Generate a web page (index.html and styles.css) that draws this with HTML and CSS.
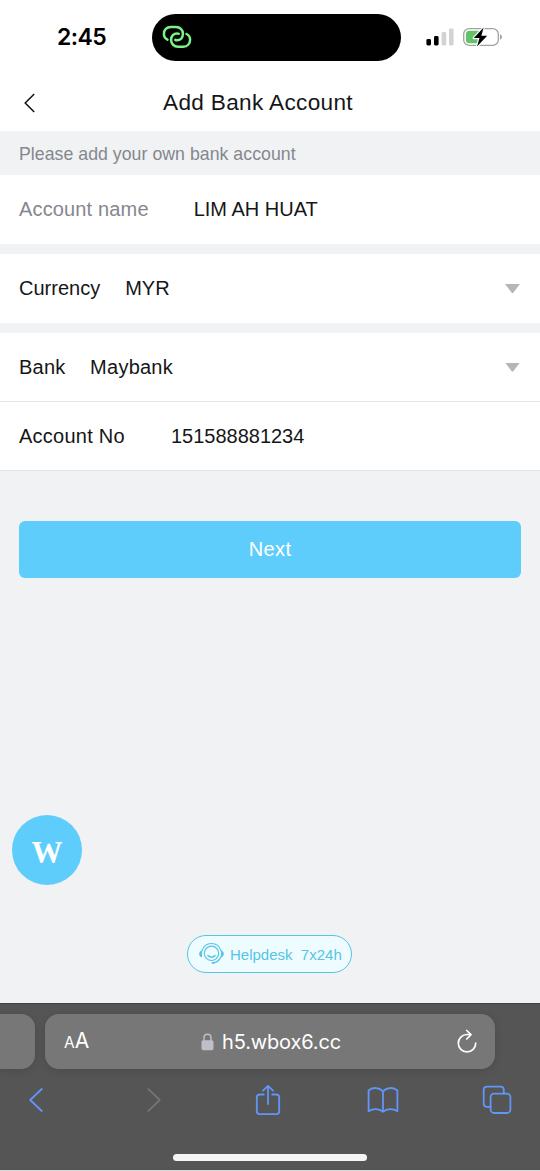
FILE: index.html
```html
<!DOCTYPE html>
<html lang="en">
<head>
<meta charset="utf-8">
<title>Add Bank Account</title>
<link rel="stylesheet" href="styles.css">
</head>
<body>
<div class="phone">
  <div class="status">
    <span class="time">2:45</span>
    <div class="island">
      <svg width="32" height="28" viewBox="0 0 32 28" fill="none" stroke="#7ff286" stroke-width="2.5" stroke-linecap="round">
        <path d="M6.500 16.700C4.300 15.600 2.900 13.500 2.900 11C2.900 6.900 5.700 4 9.700 4H15C19 4 21.900 6.900 21.900 10.800C21.900 14.900 19.300 17.300 16 17.300C15.300 17.300 14.800 17.200 14.300 16.900"/>
        <path d="M25.500 11C27.700 12.100 29.100 14.200 29.100 16.700C29.100 20.800 26.300 23.700 22.300 23.700H17C13 23.700 10.100 20.800 10.100 16.900C10.100 12.800 12.700 10.400 16 10.400C16.700 10.400 17.200 10.500 17.700 10.800"/>
      </svg>
    </div>
    <svg class="signal" width="28" height="18" viewBox="0 0 28 18">
      <rect x="0.400" y="11" width="4.600" height="6.500" rx="1.400"/>
      <rect x="8" y="8" width="4.600" height="9.500" rx="1.400"/>
      <rect x="15.600" y="4" width="4.600" height="13.500" rx="1.400" fill="#d3d3d5"/>
      <rect x="23" y="0.500" width="4.600" height="17" rx="1.400" fill="#d3d3d5"/>
    </svg>
    <svg class="battery" width="41" height="22" viewBox="0 0 41 22">
      <rect x="1.700" y="2.600" width="34.600" height="16.800" rx="5.500" fill="#fff" stroke="#a2a2a5" stroke-width="1.300"/>
      <path d="M38 8.200Q40 9 40 11T38 13.800Z" fill="#a2a2a5"/>
      <rect x="3.900" y="4.700" width="15" height="12.600" rx="3.600" fill="#62c466"/>
      <path d="M21.600 1.500L11.800 12H17.500L15 20.500L25.200 9.700H19.400Z" fill="#000" stroke="#fff" stroke-width="2.400" paint-order="stroke" stroke-linejoin="round"/>
    </svg>
  </div>
  <header class="header">
    <svg class="back" width="12" height="20" viewBox="0 0 12 20" fill="none" stroke="#111" stroke-width="1.500"><path d="M10.200 1L1.200 10L10.200 19"/></svg>
    <h1 class="title">Add Bank Account</h1>
  </header>
  <main class="main">
    <p class="notice">Please add your own bank account</p>
    <section class="group">
      <div class="row"><span class="muted">Account name</span><span class="name">LIM AH HUAT</span></div>
    </section>
    <section class="group">
      <div class="row"><span>Currency</span><span class="currency">MYR</span><i class="caret"></i></div>
    </section>
    <section class="group">
      <div class="row lined"><span class="wide">Bank</span><span class="bank">Maybank</span><i class="caret"></i></div>
      <div class="row lined"><span class="wide">Account No</span><span class="number">151588881234</span></div>
    </section>
    <button class="next">Next</button>
    <div class="helpdesk">
      <svg width="28" height="24" viewBox="0 0 28 24" fill="none" stroke="#55c4e6" stroke-width="1.200" stroke-linecap="round">
        <circle cx="13.500" cy="11.300" r="7.200"/>
        <path d="M4 9C5.300 4.300 9 1.500 13.500 1.500S21.700 4.300 23 9M23 14.500C21.800 18 19.500 20 16 20.700"/>
        <path d="M10 13.700Q13.500 16.800 17 13.700" stroke-width="1.600"/>
        <path d="M4 8.400C0.200 8.800 0.200 14.700 4 15.200ZM23 8.400C26.800 8.800 26.800 14.700 23 15.200Z" fill="#55c4e6" stroke="none"/>
        <path d="M14.500 20.900H16" stroke-width="1.900"/>
      </svg>
      <span>Helpdesk&nbsp; 7x24h</span>
    </div>
    <div class="bubble">W</div>
  </main>
  <footer class="browser">
    <div class="tabs">
      <div class="tab-previous"></div>
      <div class="address">
        <span class="text-size"><small>A</small>A</span>
        <span class="domain">
          <svg width="13" height="18" viewBox="0 0 13 18"><rect x="0.500" y="7.300" width="12" height="10" rx="1.700" fill="#c0bfc7"/><path d="M3 8V4.800C3 0.100 10 0.100 10 4.800V8" fill="none" stroke="#c0bfc7" stroke-width="1.500"/></svg>
          <span class="url">h5.wbox6.cc</span>
        </span>
        <svg class="reload" width="22" height="26" viewBox="0 0 22 26" fill="none" stroke="#fff" stroke-width="1.700" stroke-linecap="round" stroke-linejoin="round"><path d="M19.700 14.200A8.700 8.700 0 1 1 11 5.500H14.800M10.700 1.500L15 5.700L10.700 10"/></svg>
      </div>
    </div>
    <nav class="tools">
      <svg width="16" height="26" viewBox="0 0 16 26"><path d="M13.800 2L2.200 13L13.800 24"/></svg>
      <svg class="disabled" width="16" height="26" viewBox="0 0 16 26"><path d="M2.200 2L13.800 13L2.200 24"/></svg>
      <svg class="share" width="26" height="32" viewBox="0 0 26 32"><path d="M8.800 10.500H4.700Q1.800 10.500 1.800 13.400V27.200Q1.800 30.100 4.700 30.100H21.300Q24.200 30.100 24.200 27.200V13.400Q24.200 10.500 21.300 10.500H17.200M13 20V2M8 6.700L13 1.800L18 6.700"/></svg>
      <svg class="book" width="32" height="28" viewBox="0 0 32 28"><path d="M16 5.500C12.500 1.300 5.500 0.800 1.600 4.500V25.300C6 22.200 12.300 22.400 16 25.800C19.700 22.400 26 22.200 30.400 25.300V4.500C26.500 0.800 19.500 1.300 16 5.500V25.800"/></svg>
      <svg class="pages" width="30" height="30" viewBox="0 0 30 30"><rect x="8.600" y="8.600" width="19.800" height="19.400" rx="3.500"/><path d="M8.600 21.800H5Q1.700 21.800 1.700 18.500V5Q1.700 1.700 5 1.700H18.500Q21.800 1.700 21.800 5V8.600"/></svg>
    </nav>
    <div class="home"></div>
  </footer>
</div>
</body>
</html>
```
FILE: styles.css
```css
* { box-sizing: border-box; }
body { margin: 0; background: #fff; color: #151618; font-family: "Liberation Sans", Arial, sans-serif; }
svg { display: block; flex: none; }
.phone { width: 540px; height: 1171px; display: flex; flex-direction: column; overflow: hidden; }

.status { height: 74px; display: flex; align-items: center; flex: none; }
.time { width: 152px; padding-left: 57px; font: 600 23px/28px Inter, sans-serif; letter-spacing: -0.6px; color: #000; }
.island { width: 249px; height: 47px; border-radius: 24px; background: #000; display: flex; align-items: center; padding-left: 9px; }
.signal { margin-left: 25px; }
.battery { margin-left: 8px; }

.header { height: 57px; flex: none; display: flex; align-items: center; padding-left: 24px; }
.title { margin: 0 0 0 127px; font-size: 22.6px; line-height: 28px; font-weight: 400; letter-spacing: 0.33px; white-space: nowrap; }

.main { position: relative; flex: 1; background: #f0f2f4; display: flex; flex-direction: column; }
.notice { margin: 0; height: 44px; padding-left: 19px; font-size: 17.7px; line-height: 46px; letter-spacing: 0.04px; color: #85878e; }
.group { background: #fff; margin-bottom: 10px; }
.row { height: 69px; display: flex; align-items: center; padding: 0 20px 0 19px; font-size: 20px; white-space: nowrap; }
.lined { border-bottom: 1px solid #e2e4e6; }
.muted { color: #85878e; letter-spacing: 0.15px; }
.wide { letter-spacing: 0.25px; }
.name { margin-left: 45px; }
.currency { margin-left: 25px; }
.bank { margin-left: 24.5px; letter-spacing: 0.25px; }
.number { margin-left: 46px; }
.caret { margin-left: auto; width: 15px; height: 9px; background: #b3b6bc; clip-path: polygon(0 0, 100% 0, 54% 100%, 46% 100%); }

.next { margin: 40px 19px 0; padding: 0 0 1px; height: 57px; border: 0; border-radius: 6px; background: #5fcdfb; color: #fff; font: 20px/24px "Liberation Sans", Arial, sans-serif; letter-spacing: 0.4px; }
.helpdesk { width: 165px; height: 38px; margin: auto auto 30px 187px; padding-left: 10px; display: flex; align-items: center; gap: 4px; border: 1.5px solid #55c4e6; border-radius: 19px; background: #effcff; color: #55c4e6; font-size: 15px; white-space: nowrap; }
.bubble { position: absolute; left: 12px; top: 684px; width: 70px; height: 70px; border-radius: 50%; background: #5fcdfb; color: #fff; text-align: center; font: 700 31px/76px "Liberation Serif", "Times New Roman", serif; }

.browser { height: 168px; flex: none; background: #555; border-top: 1px solid #404040; border-bottom: 1px solid #d8d8d8; }
.tabs { display: flex; gap: 10px; padding-top: 10px; }
.tab-previous, .address { height: 55px; background: #777; box-shadow: 0 2px 8px rgba(0, 0, 0, 0.12); }
.tab-previous { width: 35px; border-radius: 0 14px 14px 0; }
.address { width: 450px; border-radius: 14px; display: flex; align-items: center; padding: 0 17px 0 19px; color: #fff; font-family: Inter, sans-serif; }
.text-size { font-size: 21px; line-height: 28px; width: 137px; }
.text-size small { font-size: 15.500px; }
.domain { display: flex; align-items: center; gap: 8px; }
.url { font-size: 20px; line-height: 26px; letter-spacing: -0.15px; }
.reload { margin-left: auto; }
.tools { height: 62px; padding-left: 28px; display: flex; align-items: center; fill: none; stroke: #6096f8; stroke-width: 1.8; stroke-linecap: round; stroke-linejoin: round; }
.disabled { stroke: #737373; margin-left: 102px; }
.share { margin-left: 92.5px; }
.book { margin-left: 86px; }
.pages { margin-left: 83.5px; }
.home { width: 194px; height: 7px; margin: 23px auto 0; border-radius: 4px; background: #f5f5f5; }
```
